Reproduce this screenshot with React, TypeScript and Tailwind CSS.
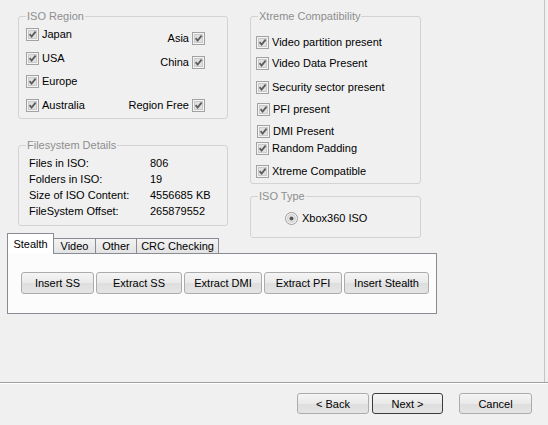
import type { ReactNode } from "react";

function Check() {
  return (
    <svg width="13" height="13" viewBox="0 0 13 13" className="shrink-0">
      <rect x="0.5" y="0.5" width="12" height="12" fill="#f4f4f4" stroke="#a2a2a2" />
      <rect x="2.5" y="2.5" width="8" height="8" fill="#e1e1e1" stroke="#cacaca" />
      <path d="M3.6 6.2 L5.6 8.6 L9.6 3.6" fill="none" stroke="#5e5e5e" strokeWidth="1.8" />
    </svg>
  );
}

function Radio() {
  return (
    <svg width="13" height="13" viewBox="0 0 13 13" className="shrink-0">
      <circle cx="6.5" cy="6.5" r="6" fill="#f4f4f4" stroke="#9c9c9c" />
      <circle cx="6.5" cy="6.5" r="4" fill="#e6e6e6" stroke="#cdcdcd" />
      <circle cx="6.5" cy="6.5" r="2" fill="#555555" />
    </svg>
  );
}

function CheckItem({ label, right, className = "" }: { label: string; right?: boolean; className?: string }) {
  return (
    <div className={`flex h-[14px] items-center gap-[3px] ${className}`}>
      {right ? (
        <>
          <span>{label}</span>
          <Check />
        </>
      ) : (
        <>
          <Check />
          <span>{label}</span>
        </>
      )}
    </div>
  );
}

function Group({ title, className = "", children }: { title: string; className?: string; children: ReactNode }) {
  return (
    <fieldset className={`rounded-[3px] border border-[#d3d3d3] ${className}`}>
      <legend className="ml-[7px] px-[1px] leading-[13px] text-[#8e8e8e]">{title}</legend>
      {children}
    </fieldset>
  );
}

function Button({ label, className = "", primary }: { label: string; className?: string; primary?: boolean }) {
  return (
    <button
      className={`flex items-center justify-center rounded-[3px] border bg-[linear-gradient(#f5f5f5,#e9e9e9_50%,#dedede_51%,#e4e4e4)] ${
        primary ? "border-[#3c3c3c]" : "border-[#acacac]"
      } ${className}`}
    >
      {label}
    </button>
  );
}

export default function App() {
  const fsRows = [
    ["Files in ISO:", "806"],
    ["Folders in ISO:", "19"],
    ["Size of ISO Content:", "4556685 KB"],
    ["FileSystem Offset:", "265879552"],
  ];

  return (
    <div className="flex h-[425px] w-[548px] flex-col bg-[#f0f0f0] font-['Liberation_Sans',Arial,sans-serif] text-[11px] leading-[14px] text-black">
      <div className="h-[382px] w-[545px] shrink-0 border-r border-[#c4c4c4]">
        {/* top groups */}
        <div className="flex h-[233px] items-start pl-[18px] pt-[10px]">
          <div className="flex w-[210px] flex-col">
            <Group title="ISO Region" className="pb-[6px]">
              <div className="flex flex-col pl-[7px] pr-[22px] pt-[4px]">
                <div className="flex h-[24px] items-start justify-between">
                  <CheckItem label="Japan" />
                  <CheckItem label="Asia" right className="mt-[4px]" />
                </div>
                <div className="flex h-[23px] items-start justify-between">
                  <CheckItem label="USA" />
                  <CheckItem label="China" right className="mt-[4px]" />
                </div>
                <div className="flex h-[24px] items-start justify-between">
                  <CheckItem label="Europe" />
                </div>
                <div className="flex h-[14px] items-start justify-between">
                  <CheckItem label="Australia" />
                  <CheckItem label="Region Free" right />
                </div>
              </div>
            </Group>

            <Group title="Filesystem Details" className="mt-[20px] pb-[5px]">
              <div className="grid grid-cols-[121px_1fr] pl-[10px] pt-[4px]">
                {fsRows.map(([k, v]) => (
                  <div key={k} className="contents">
                    <span className="h-[16px] leading-[14px]">{k}</span>
                    <span className="h-[16px] leading-[14px]">{v}</span>
                  </div>
                ))}
              </div>
            </Group>
          </div>

          <div className="ml-[22px] flex w-[171px] flex-col">
            <Group title="Xtreme Compatibility" className="pb-[5px]">
              <div className="flex flex-col pl-[5px] pt-[12px]">
                <CheckItem label="Video partition present" />
                <CheckItem label="Video Data Present" className="mt-[7px]" />
                <CheckItem label="Security sector present" className="mt-[10px]" />
                <CheckItem label="PFI present" className="ml-[1px] mt-[8px]" />
                <CheckItem label="DMI Present" className="ml-[1px] mt-[8px]" />
                <CheckItem label="Random Padding" className="mt-[3px]" />
                <CheckItem label="Xtreme Compatible" className="mt-[9px]" />
              </div>
            </Group>

            <Group title="ISO Type" className="mt-[6px] pb-[12px]">
              <div className="flex items-center gap-[4px] pl-[34px] pt-[8px]">
                <Radio />
                <span>Xbox360 ISO</span>
              </div>
            </Group>
          </div>
        </div>

        {/* tabs */}
        <div className="ml-[7px] w-[430px]">
          <div className="flex h-[20px] items-end">
            <div className="relative z-10 -mb-px flex h-[21px] w-[47px] items-start justify-center border border-b-0 border-[#898c95] bg-white pt-[3px]">
              Stealth
            </div>
            <div className="flex h-[15px] w-[42px] items-center justify-center border-r border-t border-[#898c95] bg-[linear-gradient(#f3f3f3,#e3e3e3)]">
              Video
            </div>
            <div className="flex h-[15px] w-[41px] items-center justify-center border-r border-t border-[#898c95] bg-[linear-gradient(#f3f3f3,#e3e3e3)]">
              Other
            </div>
            <div className="flex h-[15px] w-[82px] items-center justify-center border-r border-t border-[#898c95] bg-[linear-gradient(#f3f3f3,#e3e3e3)]">
              CRC Checking
            </div>
          </div>
          <div className="h-[61px] border border-[#898c95] bg-[#fcfcfc] pl-[13px] pt-[18px]">
            <div className="flex gap-[2px]">
              <Button label="Insert SS" className="h-[22px] w-[73px]" />
              <Button label="Extract SS" className="h-[22px] w-[86px]" />
              <Button label="Extract DMI" className="h-[22px] w-[78px]" />
              <Button label="Extract PFI" className="h-[22px] w-[78px]" />
              <Button label="Insert Stealth" className="h-[22px] w-[85px]" />
            </div>
          </div>
        </div>
      </div>

      {/* separator */}
      <div className="h-[2px] shrink-0 border-b border-t border-b-white border-t-[#a0a0a0]" />

      {/* bottom buttons */}
      <div className="flex flex-1 items-start justify-end pr-[16px] pt-[9px]">
        <Button label="< Back" className="h-[21px] w-[72px]" />
        <Button label="Next >" primary className="ml-[3px] h-[21px] w-[71px]" />
        <Button label="Cancel" className="ml-[16px] h-[21px] w-[73px]" />
      </div>
    </div>
  );
}
